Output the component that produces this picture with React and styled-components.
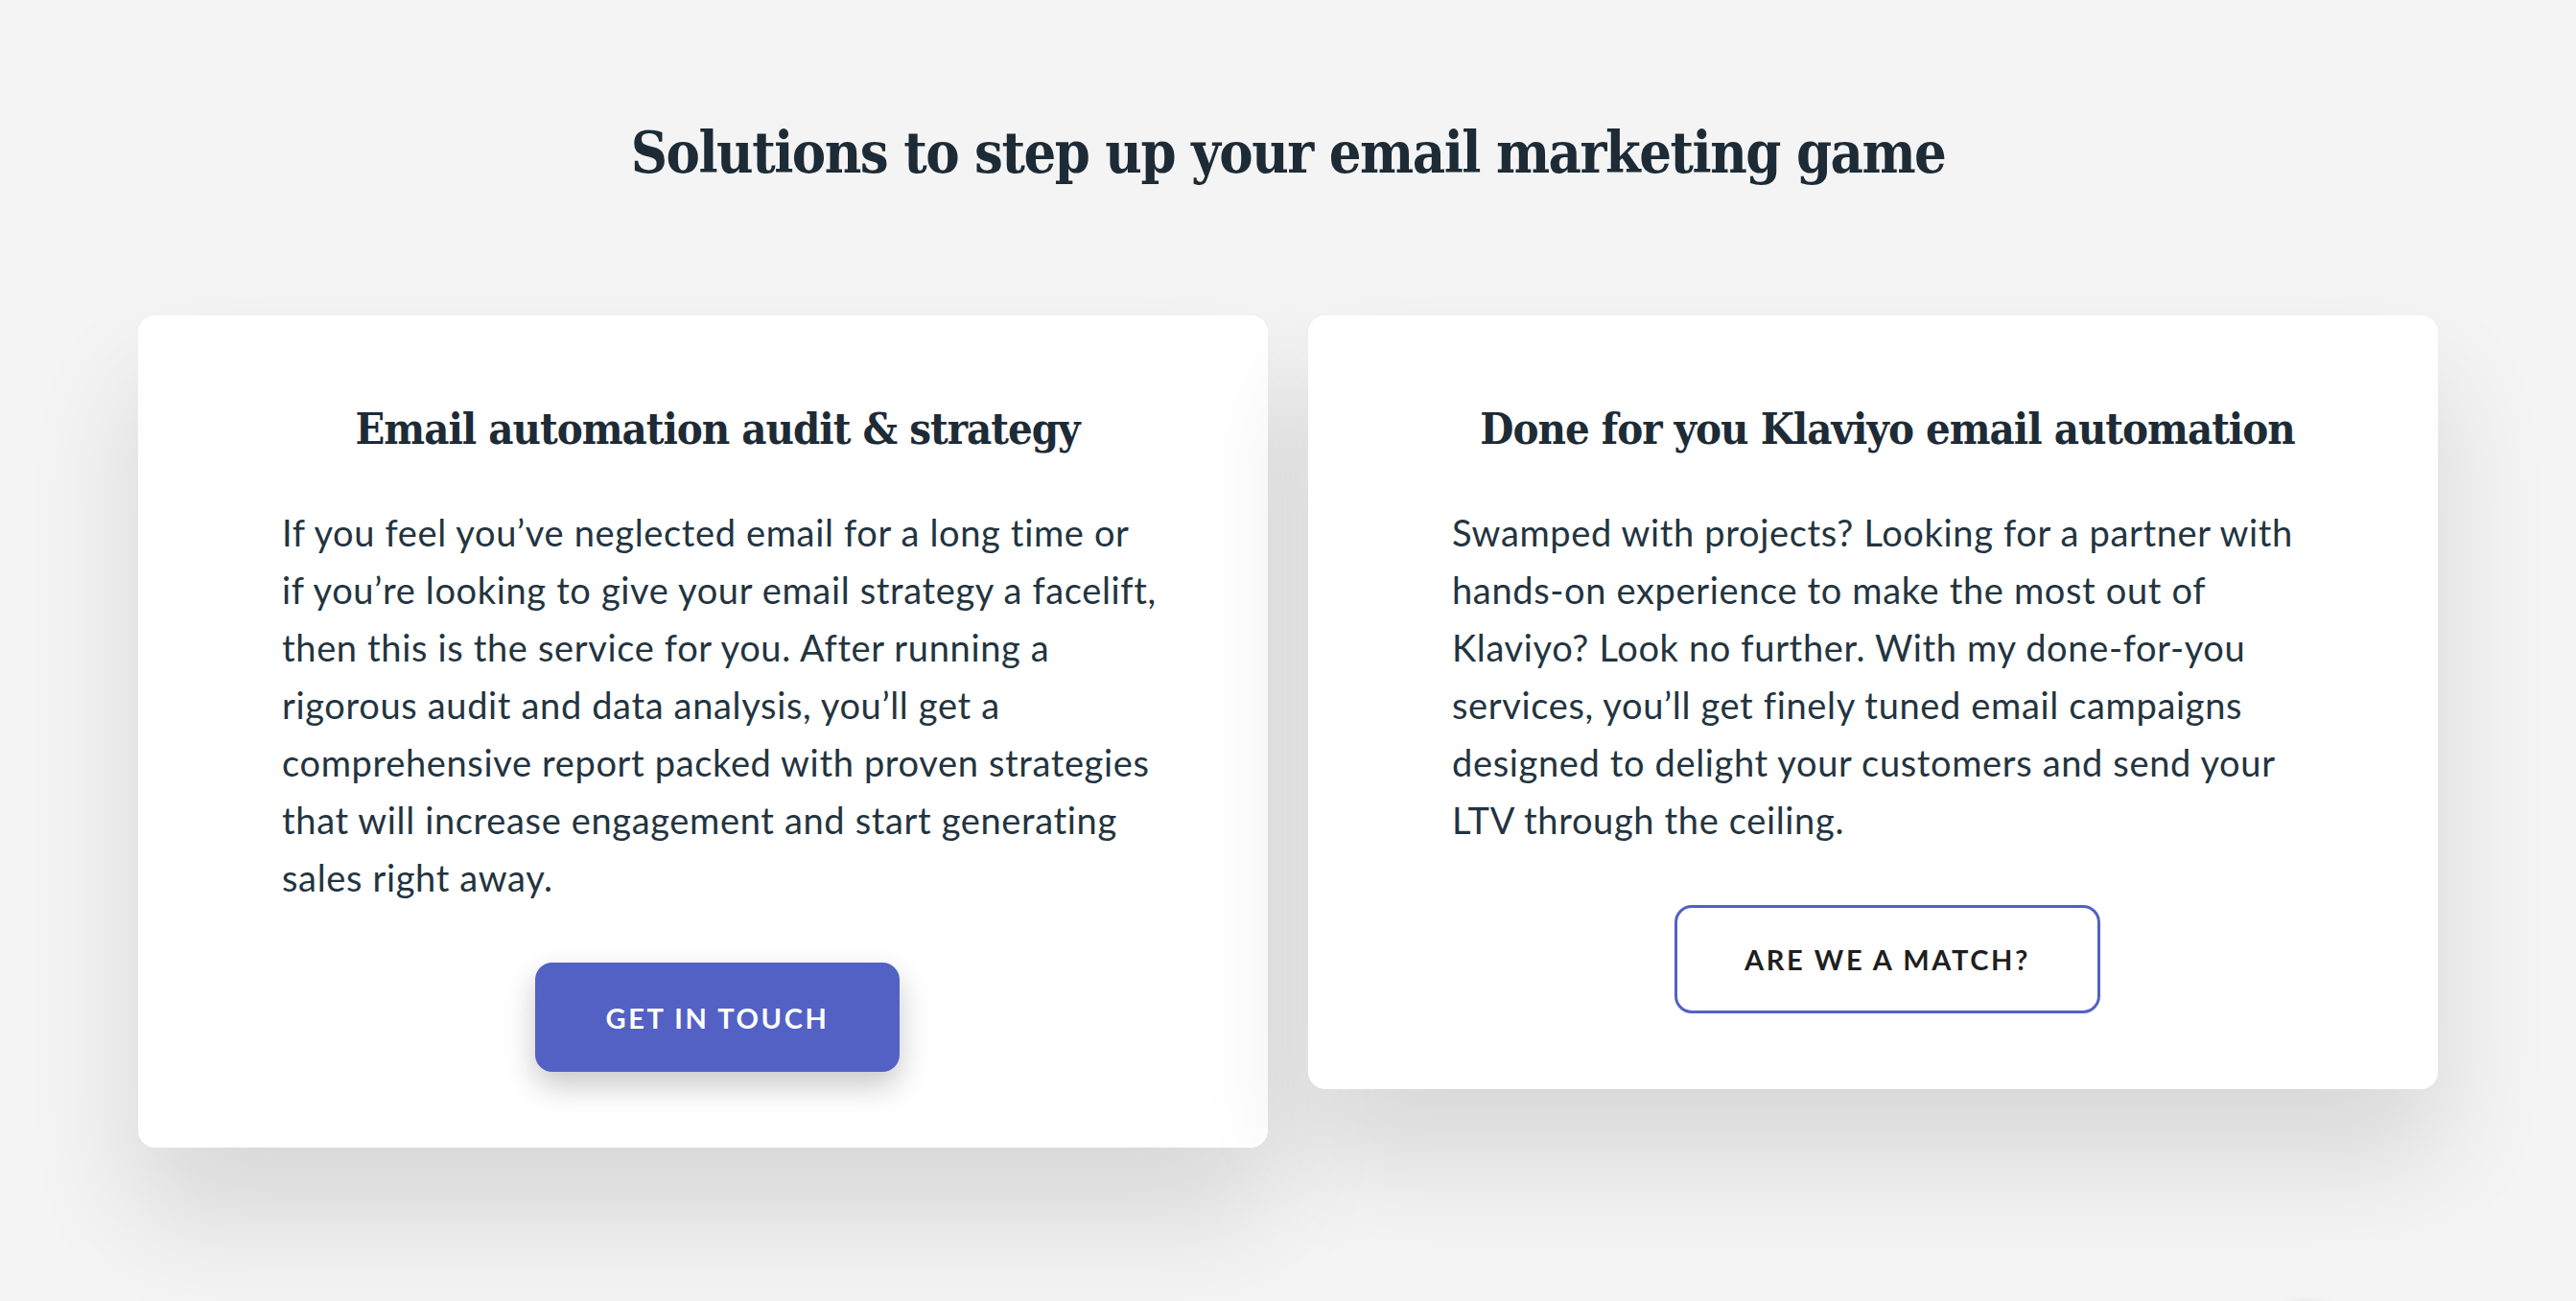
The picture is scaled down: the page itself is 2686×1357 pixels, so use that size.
import React from "react";
import styled, { createGlobalStyle } from "styled-components";

const GlobalStyle = createGlobalStyle`
  html, body {
    margin: 0;
    padding: 0;
    background: #f4f4f4;
  }
  * { box-sizing: border-box; }
`;

const Section = styled.section`
  display: flex;
  flex-direction: column;
  align-items: center;
  padding: 120px 144px 160px;
  min-height: 1357px;
`;

const Title = styled.h2`
  margin: 0;
  font-family: "DejaVu Serif Condensed", "DejaVu Serif", serif;
  font-stretch: condensed;
  font-weight: 700;
  font-size: 59px;
  line-height: 80px;
  letter-spacing: -1.5px;
  color: #1d2b36;
  text-align: center;
`;

const CardRow = styled.div`
  display: flex;
  align-items: flex-start;
  gap: 42px;
  width: 100%;
  margin-top: 129px;
`;

const Card = styled.article`
  flex: 1 1 0;
  min-width: 0;
  display: flex;
  flex-direction: column;
  align-items: center;
  background: #ffffff;
  border-radius: 18px;
  padding: 89px 120px 79px 150px;
  box-shadow: 0 70px 120px rgba(0, 0, 0, 0.12);
`;

const CardTitle = styled.h3`
  margin: 0;
  font-family: "DejaVu Serif Condensed", "DejaVu Serif", serif;
  font-stretch: condensed;
  font-weight: 700;
  font-size: 45px;
  line-height: 60px;
  letter-spacing: -1px;
  color: #1d2b36;
  text-align: center;
`;

const Body = styled.p`
  margin: 47px 0 0;
  align-self: stretch;
  font-family: Lato, "Noto Sans", sans-serif;
  font-size: 38px;
  line-height: 60px;
  letter-spacing: 0.65px;
  color: #23343f;
  text-align: left;
`;

const Line = styled.span`
  display: block;
  white-space: nowrap;
`;

const Button = styled.a`
  display: inline-flex;
  align-items: center;
  justify-content: center;
  margin-top: 59px;
  height: ${(p) => (p.$outline ? "113px" : "114px")};
  padding: 0 ${(p) => (p.$outline ? "70px" : "74px")};
  border-radius: 18px;
  font-family: Lato, "Noto Sans", sans-serif;
  font-weight: 700;
  font-size: 29px;
  letter-spacing: 2.6px;
  text-transform: uppercase;
  text-decoration: none;
  cursor: pointer;
  color: ${(p) => (p.$outline ? "#1f1f1f" : "#ffffff")};
  background: ${(p) => (p.$outline ? "#ffffff" : "#5361c5")};
  border: ${(p) => (p.$outline ? "3.5px solid #5361c5" : "none")};
  box-shadow: ${(p) =>
    p.$outline ? "none" : "0 14px 32px rgba(0, 0, 0, 0.22)"};
`;

const FloatingBubble = styled.div`
  position: fixed;
  right: 239px;
  bottom: -92px;
  width: 84px;
  height: 84px;
  border-radius: 50%;
  background: #ffffff;
  box-shadow: 0 0 14px rgba(0, 0, 0, 0.35);
`;

const services = [
  {
    title: "Email automation audit & strategy",
    lines: [
      "If you feel you’ve neglected email for a long time or",
      "if you’re looking to give your email strategy a facelift,",
      "then this is the service for you. After running a",
      "rigorous audit and data analysis, you’ll get a",
      "comprehensive report packed with proven strategies",
      "that will increase engagement and start generating",
      "sales right away.",
    ],
    cta: "Get in touch",
    outline: false,
  },
  {
    title: "Done for you Klaviyo email automation",
    lines: [
      "Swamped with projects? Looking for a partner with",
      "hands-on experience to make the most out of",
      "Klaviyo? Look no further. With my done-for-you",
      "services, you’ll get finely tuned email campaigns",
      "designed to delight your customers and send your",
      "LTV through the ceiling.",
    ],
    cta: "Are we a match?",
    outline: true,
  },
];

export default function App() {
  return (
    <>
      <GlobalStyle />
      <Section>
        <Title>Solutions to step up your email marketing game</Title>
        <CardRow>
          {services.map((s) => (
            <Card key={s.title}>
              <CardTitle>{s.title}</CardTitle>
              <Body>
                {s.lines.map((line) => (
                  <Line key={line}>{line}</Line>
                ))}
              </Body>
              <Button href="#" $outline={s.outline}>
                {s.cta}
              </Button>
            </Card>
          ))}
        </CardRow>
      </Section>
      <FloatingBubble />
    </>
  );
}
